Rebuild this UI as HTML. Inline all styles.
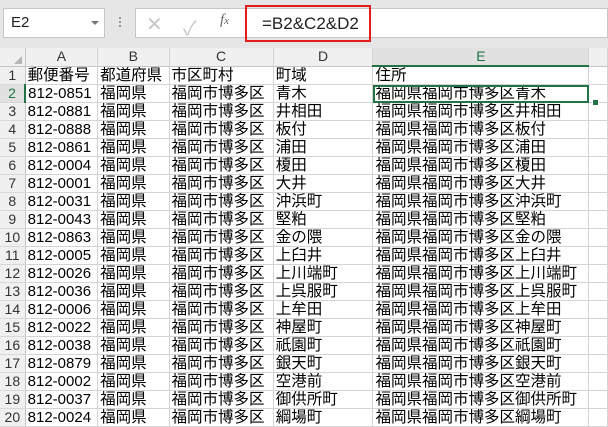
<!DOCTYPE html>
<html><head><meta charset="utf-8"><style>
*{margin:0;padding:0;box-sizing:border-box}
body{width:608px;height:416px;overflow:hidden;background:#e6e6e6;font-family:"Liberation Sans","Noto Sans CJK JP",sans-serif;position:relative}
.abs{position:absolute}
table{border-collapse:collapse;position:absolute;left:0;top:48px;table-layout:fixed;background:#fff}
td{height:18px;border-right:1px solid #d4d4d4;border-bottom:1px solid #d4d4d4;font-size:15.5px;line-height:17px;padding-left:2px;white-space:nowrap;overflow:hidden;color:#000;font-family:"Liberation Sans","Noto Sans CJK JP",sans-serif}
td.n{font-size:15px}
td.rh{background:#f0f0f0;color:#333;text-align:center;padding:0;font-size:14px;border-right:1px solid #c6c6c6;border-bottom:1px solid #d8d8d8}
tr.hd td{background:#f0f0f0;text-align:center;color:#333;font-size:14px;padding:0;border-bottom:1px solid #c6c6c6}
tr.hd td.sel{background:#e1e1e1;color:#217346;border-bottom:2px solid #217346}
</style></head><body>
<div class="abs" style="left:3px;top:8px;width:102px;height:30px;background:#fff;border:1px solid #c6c6c6;font-size:15px;line-height:28px;padding-left:7px;color:#222">E2</div>
<div class="abs" style="left:91px;top:21px;width:0;height:0;border-left:4px solid transparent;border-right:4px solid transparent;border-top:4px solid #777"></div>
<div class="abs" style="left:119px;top:17px;width:2px;height:2px;background:#999;box-shadow:0 4px #999,0 8px #999"></div>
<div class="abs" style="left:135px;top:8px;width:473px;height:30px;background:#fff;border:1px solid #c6c6c6"></div>
<div class="abs" style="left:146px;top:12px;font-size:20px;color:#c8c8c8">✕</div>
<div class="abs" style="left:183px;top:12px;font-size:20px;color:#c8c8c8">✓</div>
<div class="abs" style="left:220px;top:12px;font-size:15px;color:#666;font-style:italic;font-family:'Liberation Serif',serif">f<span style="font-size:11px">x</span></div>
<div class="abs" style="left:245px;top:5px;width:126px;height:37px;border:2px solid #e41b1b;font-size:17px;line-height:33px;padding-left:15px;color:#222">=B2&amp;C2&amp;D2</div>
<table>
<colgroup><col style="width:26px"><col style="width:73px"><col style="width:72px"><col style="width:105px"><col style="width:103px"><col style="width:217px"><col style="width:20px"></colgroup>
<tr class="hd"><td class="rh" style="background:#f0f0f0"></td><td>A</td><td>B</td><td>C</td><td>D</td><td class="sel">E</td><td></td></tr>
<tr><td class="rh">1</td><td>郵便番号</td><td>都道府県</td><td>市区町村</td><td>町域</td><td>住所</td><td></td></tr>
<tr><td class="rh" style="color:#217346;background:#e1e1e1;border-right:2px solid #217346">2</td><td class="n">812-0851</td><td>福岡県</td><td>福岡市博多区</td><td>青木</td><td style="outline:2px solid #217346;outline-offset:-2px">福岡県福岡市博多区青木</td><td></td></tr>
<tr><td class="rh">3</td><td class="n">812-0881</td><td>福岡県</td><td>福岡市博多区</td><td>井相田</td><td>福岡県福岡市博多区井相田</td><td></td></tr>
<tr><td class="rh">4</td><td class="n">812-0888</td><td>福岡県</td><td>福岡市博多区</td><td>板付</td><td>福岡県福岡市博多区板付</td><td></td></tr>
<tr><td class="rh">5</td><td class="n">812-0861</td><td>福岡県</td><td>福岡市博多区</td><td>浦田</td><td>福岡県福岡市博多区浦田</td><td></td></tr>
<tr><td class="rh">6</td><td class="n">812-0004</td><td>福岡県</td><td>福岡市博多区</td><td>榎田</td><td>福岡県福岡市博多区榎田</td><td></td></tr>
<tr><td class="rh">7</td><td class="n">812-0001</td><td>福岡県</td><td>福岡市博多区</td><td>大井</td><td>福岡県福岡市博多区大井</td><td></td></tr>
<tr><td class="rh">8</td><td class="n">812-0031</td><td>福岡県</td><td>福岡市博多区</td><td>沖浜町</td><td>福岡県福岡市博多区沖浜町</td><td></td></tr>
<tr><td class="rh">9</td><td class="n">812-0043</td><td>福岡県</td><td>福岡市博多区</td><td>堅粕</td><td>福岡県福岡市博多区堅粕</td><td></td></tr>
<tr><td class="rh">10</td><td class="n">812-0863</td><td>福岡県</td><td>福岡市博多区</td><td>金の隈</td><td>福岡県福岡市博多区金の隈</td><td></td></tr>
<tr><td class="rh">11</td><td class="n">812-0005</td><td>福岡県</td><td>福岡市博多区</td><td>上臼井</td><td>福岡県福岡市博多区上臼井</td><td></td></tr>
<tr><td class="rh">12</td><td class="n">812-0026</td><td>福岡県</td><td>福岡市博多区</td><td>上川端町</td><td>福岡県福岡市博多区上川端町</td><td></td></tr>
<tr><td class="rh">13</td><td class="n">812-0036</td><td>福岡県</td><td>福岡市博多区</td><td>上呉服町</td><td>福岡県福岡市博多区上呉服町</td><td></td></tr>
<tr><td class="rh">14</td><td class="n">812-0006</td><td>福岡県</td><td>福岡市博多区</td><td>上牟田</td><td>福岡県福岡市博多区上牟田</td><td></td></tr>
<tr><td class="rh">15</td><td class="n">812-0022</td><td>福岡県</td><td>福岡市博多区</td><td>神屋町</td><td>福岡県福岡市博多区神屋町</td><td></td></tr>
<tr><td class="rh">16</td><td class="n">812-0038</td><td>福岡県</td><td>福岡市博多区</td><td>祇園町</td><td>福岡県福岡市博多区祇園町</td><td></td></tr>
<tr><td class="rh">17</td><td class="n">812-0879</td><td>福岡県</td><td>福岡市博多区</td><td>銀天町</td><td>福岡県福岡市博多区銀天町</td><td></td></tr>
<tr><td class="rh">18</td><td class="n">812-0002</td><td>福岡県</td><td>福岡市博多区</td><td>空港前</td><td>福岡県福岡市博多区空港前</td><td></td></tr>
<tr><td class="rh">19</td><td class="n">812-0037</td><td>福岡県</td><td>福岡市博多区</td><td>御供所町</td><td>福岡県福岡市博多区御供所町</td><td></td></tr>
<tr><td class="rh">20</td><td class="n">812-0024</td><td>福岡県</td><td>福岡市博多区</td><td>綱場町</td><td>福岡県福岡市博多区綱場町</td><td></td></tr>
</table>
<div class="abs" style="left:592px;top:99px;width:7px;height:7px;background:#217346;border:1px solid #fff"></div>
<div class="abs" style="left:0;top:48px;width:0;height:0;border-left:8px solid transparent;border-bottom:8px solid #b5b5b5;margin:8px 0 0 14px"></div>
</body></html>
